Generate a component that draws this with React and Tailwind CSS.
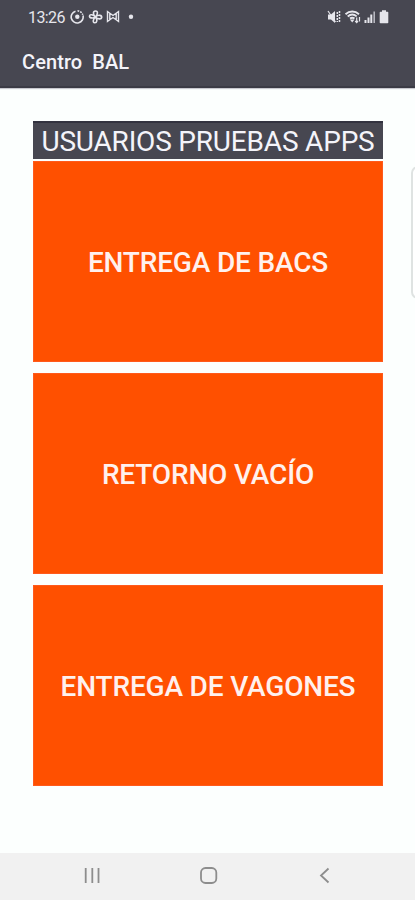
function StatusBar() {
  return (
    <div className="flex h-[34px] items-center justify-between pl-[28px] pr-[26px] text-[#e6e6ec]">
      <div className="flex items-center">
        <span className="w-[42px] whitespace-nowrap pt-[1px] text-[16px] leading-[34px] tracking-[-0.6px]">13:26</span>
        <svg width="66" height="16" viewBox="70 9 66 16" fill="none" stroke="currentColor">
          <path d="M75.500 11.200a6 6 0 1 0 7.500 4.300" strokeWidth="1.600" />
          <path d="M77.500 10.800a6 6 0 0 1 5.300 4" strokeWidth="1.600" strokeDasharray="1.800 1" />
          <circle cx="77.300" cy="16.700" r="2.200" fill="currentColor" stroke="none" />
          <path d="M95.500 17c-3-2.500-2.500-6 0-6 2.800 0 2.300 3.500 0 6 3-2.800 6.500-1.800 6.200.5-.4 2.200-4 1.600-6.200-.5 2.300 2.600 1.500 6-.8 5.800-2.300-.3-1.700-3.800.8-5.800-3 1.700-6.200 1-6-1 .3-2.200 4-1.500 6 1Z" strokeWidth="1.600" />
          <path d="M107.500 21.500v-10l5.500 4 5.500-4v10l-5.500-4-5.500 4ZM109.800 13v7M116.200 13v7" strokeWidth="1.400" />
          <circle cx="131" cy="16.700" r="2.200" fill="currentColor" stroke="none" />
        </svg>
      </div>
      <svg width="63" height="16" viewBox="326 9 63 16" fill="none" stroke="currentColor">
        <path d="M328 14.500h3l4-3.500v12l-4-3.500h-3Z" fill="currentColor" stroke="none" />
        <path d="m328 11 7.500 11" strokeWidth="1.200" />
        <path d="M337.300 12v10M339.500 11v12" strokeWidth="1.500" strokeDasharray="2 1" />
        <path d="M345.500 14.200c4-3.600 9.500-3.600 13.500 0M347.700 16.400c2.800-2.300 6.300-2.300 9 0M350 18.600c1.400-1.100 3-1.100 4.500 0" strokeWidth="1.900" />
        <path d="m352.200 22.500 2.300-3h-4.600Z" fill="currentColor" stroke="none" />
        <path d="M356.700 17.500v5m-1.500-1.500 1.500 1.500 1.300-1.500M359.500 21.500v-4.500" strokeWidth="1.200" />
        <path d="M365.500 20v3M368.500 17.500V23M371.300 14.500V23" strokeWidth="2" />
        <path d="M374.200 11.500V23" strokeWidth="1.500" opacity=".75" />
        <path d="M382 10.300h4v1.500h1.500q.8 0 .8.800v9.800q0 .8-.8.800h-7q-.8 0-.8-.8v-9.800q0-.8.800-.8H382Z" fill="currentColor" stroke="none" />
      </svg>
    </div>
  );
}

function ActionButton({ children }) {
  return (
    <button className="flex h-[201px] w-full items-center justify-center whitespace-nowrap border border-[#ff5a1c] bg-[#ff5000] pt-[3px] text-[28px] font-medium leading-none tracking-[-0.17px] text-[#fff1ee]">
      {children}
    </button>
  );
}

export default function App() {
  return (
    <div className="relative flex h-[900px] w-[415px] flex-col overflow-hidden bg-[#fcfffe] font-['Roboto',sans-serif]">
      <header className="h-[88px] shrink-0 border-b-2 border-[#3b3b45] bg-[#474751] shadow-[0_1px_1px_#c8c8ce]">
        <StatusBar />
        <h1 className="whitespace-pre pl-[22px] pt-[15px] text-[20px] font-medium leading-[26px] tracking-[0.08px] text-[#f4f4fa]">Centro  BAL</h1>
      </header>
      <main className="flex flex-1 flex-col pl-[33px] pr-[32px] pt-[33px]">
        <div className="flex h-[38px] items-center justify-center whitespace-nowrap border-t-2 border-[#32323f] bg-[#474751] pt-[2px] text-[28px] leading-none tracking-[-0.19px] text-[#f4f4fa]">
          <span>USUARIOS PRUEBAS APPS</span>
        </div>
        <div className="mt-[2px] flex flex-col gap-[11px]">
          <ActionButton>ENTREGA DE BACS</ActionButton>
          <ActionButton>RETORNO VACÍO</ActionButton>
          <ActionButton>ENTREGA DE VAGONES</ActionButton>
        </div>
      </main>
      <div className="absolute -right-[10px] top-[166px] h-[133px] w-[14px] rounded-[7px] border-2 border-[#dfe3e2] bg-white" />
      <nav className="flex h-[47px] shrink-0 justify-center bg-[#f1f1f1]">
        <svg width="415" height="47" viewBox="0 853 415 47" fill="none" stroke="#8d8d8d" strokeWidth="1.800">
          <path d="M85.700 868v15M92.300 868v15M98.500 868v15" />
          <rect x="201" y="868" width="15.300" height="15" rx="4.500" />
          <path d="m328.500 868.500-7.500 7 7.500 7" />
        </svg>
      </nav>
    </div>
  );
}
